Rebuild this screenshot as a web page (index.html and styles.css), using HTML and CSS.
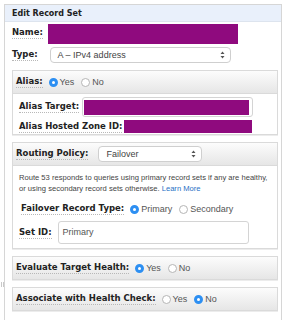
FILE: index.html
```html
<!DOCTYPE html>
<html lang="en">
<head>
    <meta charset="UTF-8">
    <title>Edit Record Set</title>
    <link rel="stylesheet" href="styles.css">
</head>
<body>
    <div class="panel">
        <div class="panel-header">Edit Record Set</div>

        <div class="row">
            <span class="label">Name:</span>
            <div class="redacted name-box"></div>
        </div>

        <div class="row type-row">
            <span class="label">Type:</span>
            <div class="select type-select">
                <span>A – IPv4 address</span>
                <svg class="arrows" width="5" height="8" viewBox="0 0 5 8"><path d="M2.5 0.5 L4.5 3 L0.5 3 Z M2.5 7.5 L4.5 5 L0.5 5 Z" fill="#555"/></svg>
            </div>
        </div>

        <!-- Alias -->
        <div class="section">
            <div class="section-head">
                <span class="label">Alias:</span>
                <span class="radio on"></span><span class="opt">Yes</span>
                <span class="radio"></span><span class="opt">No</span>
            </div>
            <div class="section-body alias-body">
                <div class="row">
                    <span class="label">Alias Target:</span>
                    <div class="input target-input"><div class="redacted"></div></div>
                </div>
                <div class="row zone-row">
                    <span class="label">Alias Hosted Zone ID:</span>
                    <div class="redacted zone-box"></div>
                </div>
            </div>
        </div>

        <!-- Routing -->
        <div class="section">
            <div class="section-head">
                <span class="label">Routing Policy:</span>
                <div class="select routing-select">
                    <span>Failover</span>
                    <svg class="arrows" width="5" height="8" viewBox="0 0 5 8"><path d="M2.5 0.5 L4.5 3 L0.5 3 Z M2.5 7.5 L4.5 5 L0.5 5 Z" fill="#555"/></svg>
                </div>
            </div>
            <div class="section-body routing-body">
                <p class="help"><span>Route 53 responds to queries using primary record sets if any are healthy,</span><br><span>or using secondary record sets otherwise.</span> <a href="#">Learn More</a></p>
                <div class="row failover-row">
                    <span class="label">Failover Record Type:</span>
                    <span class="radio on"></span><span class="opt">Primary</span>
                    <span class="radio"></span><span class="opt">Secondary</span>
                </div>
                <div class="row setid-row">
                    <span class="label">Set ID:</span>
                    <div class="input setid-input">Primary</div>
                </div>
            </div>
        </div>

        <div class="section">
            <div class="section-head">
                <span class="label">Evaluate Target Health:</span>
                <span class="radio on"></span><span class="opt">Yes</span>
                <span class="radio"></span><span class="opt">No</span>
            </div>
        </div>

        <div class="section">
            <div class="section-head">
                <span class="label">Associate with Health Check:</span>
                <span class="radio"></span><span class="opt">Yes</span>
                <span class="radio on"></span><span class="opt">No</span>
            </div>
        </div>
    </div>
    <div class="grip"></div>
</body>
</html>
```

FILE: styles.css
```css
body {
    margin: 0;
    background: #ffffff;
    font-family: 'Liberation Sans', Arial, sans-serif;
    color: #333;
}

.panel {
    margin: 4px 0 0 4px;
    width: 266px;
    height: 320px;
    border: 1px solid #d6d6d6;
    border-bottom: none;
    padding: 0 3px 0 7px;
}

.panel-header {
    margin: 0 -3px 0 -7px;
    padding: 0 7px;
    height: 16px;
    line-height: 17px;
    background: #e9f0fb;
    border-bottom: 1px solid #dde4ee;
    font-family: 'DejaVu Sans', Verdana, sans-serif;
    font-weight: bold;
    font-size: 8px;
    color: #222;
}

.row {
    display: flex;
    align-items: center;
}

.label {
    font-family: 'DejaVu Sans', Verdana, sans-serif;
    font-weight: bold;
    font-size: 8.5px;
    color: #222;
    border-bottom: 1px dotted #b8b8b8;
    line-height: 11px;
    white-space: nowrap;
}

.redacted {
    background: #8f0a7e;
}

.name-box {
    width: 190px;
    height: 20px;
    margin: 2px 0 0 5px;
}

.type-row {
    margin-top: 3px;
}

.select {
    display: flex;
    align-items: center;
    justify-content: space-between;
    height: 15px;
    border: 1px solid #cfcfcf;
    border-radius: 4px;
    background: #fff;
    font-size: 9px;
    color: #444;
    padding: 0 5px 0 7px;
    box-sizing: border-box;
}

.type-select {
    width: 181px;
    height: 16px;
    margin-left: 12px;
}

.section {
    margin-top: 7px;
    border: 1px solid #dadada;
    box-shadow: 0 1px 0 #ececec;
}

.section-head {
    display: flex;
    align-items: center;
    height: 22px;
    padding: 0 3px;
    background: linear-gradient(#fcfcfc, #e6e6e6);
}

.section-body {
    border-top: 1px solid #dadada;
    background: #fff;
}

.radio {
    width: 9px;
    height: 9px;
    flex: none;
    box-sizing: border-box;
    border-radius: 50%;
    border: 1px solid #b5b5b5;
    background: #fff;
    margin-left: 7px;
}

.label + .radio {
    margin-left: 6px;
}

.radio.on {
    border: 3px solid #2d8ff2;
    background: #fff;
}

.opt {
    font-size: 9px;
    color: #555;
    margin-left: 2px;
}

.alias-body {
    padding: 3px 6px 1px;
}

.input {
    border: 1px solid #d4d4d4;
    border-radius: 3px;
    background: #fff;
    box-sizing: border-box;
}

.target-input {
    width: 171px;
    height: 20px;
    margin-left: 3px;
    padding: 2px 3px 1px 1px;
}

.target-input .redacted {
    height: 100%;
}

.zone-row {
    margin-top: 3px;
}

.zone-box {
    width: 128px;
    height: 13px;
    margin-left: 2px;
}

.routing-select {
    width: 104px;
    margin-left: 10px;
    height: 16px;
}

.routing-body {
    padding: 6px 8px 4px 6px;
}

.help {
    margin: 0;
    font-size: 7.6px;
    line-height: 11px;
    color: #444;
}

.help a {
    color: #1f6fc5;
    text-decoration: none;
}

.failover-row {
    margin-top: 9px;
    padding-left: 2px;
}

.setid-row {
    margin-top: 6px;
}

.setid-input {
    width: 191px;
    height: 23px;
    margin-left: 6px;
    font-size: 9px;
    color: #555;
    line-height: 21px;
    padding-left: 4px;
}

.grip {
    position: absolute;
    left: 1px;
    top: 282px;
    width: 1px;
    height: 5px;
    border-left: 1px solid #c8c8c8;
    border-right: 1px solid #c8c8c8;
}
```
